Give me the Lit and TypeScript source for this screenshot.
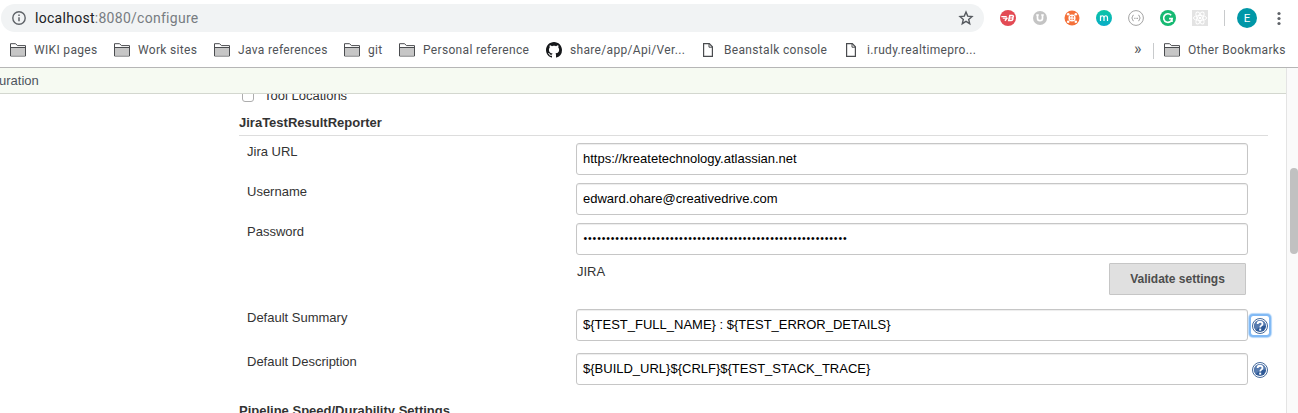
import { LitElement, html, css, svg, nothing } from "lit";
import { customElement, property } from "lit/decorators.js";

const folderIcon = html`<svg class="ico" width="16" height="14" viewBox="0 0 16 14">
  <path d="M.5 13V.7H5.6L7.4 2.6H15.5V13Z" fill="#fff" stroke="#4a4c4f" stroke-width="1"/>
  <path d="M1 5h14v7.5H1z" fill="#c6c6c6"/><path d="M1 4.5h14" stroke="#4a4c4f"/>
</svg>`;
const pageIcon = html`<svg class="ico page" width="10" height="14" viewBox="0 0 10 14">
  <path d="M.6.6H6.3L9.4 3.8V13.4H.6Z" fill="#fff" stroke="#4a4c4f" stroke-width="1.2"/>
  <path d="M6 .8V4.2H9.2" fill="none" stroke="#4a4c4f"/>
</svg>`;
const githubIcon = html`<svg class="ico" width="16" height="16" viewBox="0 0 16 16">
  <path fill="#16181b" d="M8 0C3.58 0 0 3.58 0 8c0 3.54 2.29 6.53 5.47 7.59.4.07.55-.17.55-.38 0-.19-.01-.82-.01-1.49-2.01.37-2.53-.49-2.69-.94-.09-.23-.48-.94-.82-1.13-.28-.15-.68-.52-.01-.53.63-.01 1.08.58 1.23.82.72 1.21 1.87.87 2.33.66.07-.52.28-.87.51-1.07-1.78-.2-3.64-.89-3.64-3.95 0-.87.31-1.59.82-2.15-.08-.2-.36-1.02.08-2.12 0 0 .67-.21 2.2.82.64-.18 1.32-.27 2-.27s1.36.09 2 .27c1.53-1.04 2.2-.82 2.2-.82.44 1.1.16 1.92.08 2.12.51.56.82 1.27.82 2.15 0 3.07-1.87 3.75-3.65 3.95.29.25.54.73.54 1.48 0 1.07-.01 1.93-.01 2.2 0 .21.15.46.55.38A8.01 8.01 0 0 0 16 8c0-4.42-3.58-8-8-8Z"/>
</svg>`;

const extensions = [
  svg`<circle cx="8" cy="8" r="8" fill="#e34a54"/><path d="M1.3 6.6h5.4M2.8 8.3h4.4" stroke="#fff" stroke-width="1.1"/><path d="M5 10.8 7.3 7.6" stroke="#fff" stroke-width="1.5"/><path d="M9.8 5.6h2.6c1.5 0 1.1 2.2-.3 2.3 1.4.2.8 2.6-.8 2.6H8.7Z" fill="none" stroke="#fff" stroke-width="1.5"/><path d="M9 8h3" stroke="#fff"/>`,
  svg`<circle cx="8" cy="8" r="7" fill="#c4c4c4"/><path d="M4.2 5h2.6M9.2 5h2.6M5.5 5v3.3c0 3.2 5 3.2 5 0V5" fill="none" stroke="#fff" stroke-width="1.7"/>`,
  svg`<circle cx="8" cy="8" r="7.5" fill="#f4713a"/><g fill="#fff"><circle cx="8" cy="8" r="3.6"/><circle cx="4.2" cy="4.2" r="1.3"/><circle cx="11.8" cy="4.2" r="1.3"/><circle cx="4.2" cy="11.8" r="1.3"/><circle cx="11.8" cy="11.8" r="1.3"/></g><g fill="#f4713a"><circle cx="6.8" cy="6.7" r=".8"/><circle cx="9.3" cy="6.9" r=".8"/><circle cx="6.9" cy="9.3" r=".8"/><circle cx="9.2" cy="9.2" r=".8"/></g>`,
  svg`<defs><linearGradient id="mg" x2="0" y2="1"><stop stop-color="#0bc5a4"/><stop offset="1" stop-color="#08acc8"/></linearGradient></defs><circle cx="8" cy="8" r="8" fill="url(#mg)"/><path d="M4.5 11V5.5M4.5 8C4.5 5 8 5 8 8v3M8 8c0-3 3.5-3 3.5 0v3" fill="none" stroke="#fff" stroke-width="1.2"/>`,
  svg`<circle cx="8" cy="8" r="7.4" fill="#fff" stroke="#a3a3a3"/><path d="M5.6 5.2C4 5.2 5.2 7.2 3.6 8c1.6.8.4 2.8 2 2.8M10.4 5.2c1.6 0 .4 2 2 2.8-1.6.8-.4 2.8-2 2.8" fill="none" stroke="#969696"/><path d="M6.2 8.3h3.8" stroke="#969696" stroke-dasharray="1 .4"/>`,
  svg`<circle cx="8" cy="8" r="8" fill="#16b972"/><path d="M11.2 5.2A4.3 4.3 0 1 0 12.2 8.6H9.1M12 8.6v3.3" fill="none" stroke="#fff" stroke-width="1.6"/>`,
  svg`<path d="M0 0h16v16H0z" fill="#e3e3e3"/><g fill="none" stroke="#fff" stroke-width="1"><ellipse cx="8" cy="8" rx="6.6" ry="2.5"/><ellipse cx="8" cy="8" rx="6.6" ry="2.5" transform="rotate(60 8 8)"/><ellipse cx="8" cy="8" rx="6.6" ry="2.5" transform="rotate(120 8 8)"/></g><circle cx="8" cy="8" r="1.3" fill="#fff"/>`,
];

const bookmarks = [
  { icon: folderIcon, label: "WIKI pages" },
  { icon: folderIcon, label: "Work sites" },
  { icon: folderIcon, label: "Java references" },
  { icon: folderIcon, label: "git" },
  { icon: folderIcon, label: "Personal reference" },
  { icon: githubIcon, label: "share/app/Api/Ver..." },
  { icon: pageIcon, label: "Beanstalk console" },
  { icon: pageIcon, label: "i.rudy.realtimepro..." },
];

@customElement("browser-chrome")
class BrowserChrome extends LitElement {
  static styles = css`
    :host { display: block; background: #fff; font-family: Roboto, "Liberation Sans", sans-serif; }
    svg { display: block; flex: none; }
    .toolbar { display: flex; align-items: center; height: 28px; padding: 4px 14px 4px 1px; }
    .omnibox { display: flex; align-items: center; width: 983px; height: 28px; border-radius: 14px; background: #f1f3f4; box-sizing: border-box; padding: 0 10px 0 11px; }
    .url { flex: 1; margin-left: 9px; font-size: 14px; letter-spacing: .28px; line-height: 28px; color: #777c81; white-space: nowrap; }
    .url b { font-weight: 400; color: #202124; }
    .exts { display: flex; gap: 16px; margin-left: 16px; }
    .sep { width: 1px; height: 16px; background: #c8cacc; margin-left: 16px; }
    .avatar { width: 20px; height: 20px; border-radius: 50%; background: #0097a7; color: #fff; font-size: 11.5px; line-height: 21px; text-align: center; margin-left: 12px; }
    .dots { margin-left: 19px; }
    .bar { display: flex; align-items: flex-start; height: 31px; padding: 0 12px 0 10px; border-bottom: 1px solid #b6b6b6; font-size: 12px; color: #505357; white-space: nowrap; }
    .list { display: grid; grid-template-columns: 104px 100px 130px 55px 147px 157px 143px 288px; }
    .item { display: flex; align-items: center; gap: 8px; height: 28px; letter-spacing: .33px; }
    .item span { line-height: 28px; }
    .page { margin: 0 3px 0 0; }
    .more { width: 19px; font-size: 16px; line-height: 25px; height: 28px; }
    .bar .sep { margin: 7px 10px 0 0; }
  `;
  render() {
    return html`
      <div class="toolbar">
        <div class="omnibox">
          <svg width="14" height="14" viewBox="0 0 14 14"><circle cx="7" cy="7" r="6.2" fill="none" stroke="#5f6368" stroke-width="1.4"/><path d="M7 6.2v4M7 3.5v1.5" stroke="#5f6368" stroke-width="1.5"/></svg>
          <span class="url"><b>localhost</b>:8080/configure</span>
          <svg width="16" height="16" viewBox="0 0 16 16"><path d="M8 2.1 9.7 6.1 14 6.5 10.7 9.4 11.7 13.7 8 11.4 4.3 13.7 5.3 9.4 2 6.5 6.3 6.1Z" fill="none" stroke="#55595e" stroke-width="1.4"/></svg>
        </div>
        <div class="exts">${extensions.map((e) => html`<svg width="16" height="16" viewBox="0 0 16 16">${e}</svg>`)}</div>
        <div class="sep"></div>
        <div class="avatar">E</div>
        <svg class="dots" width="6" height="16" viewBox="0 0 6 16"><g fill="#5f6368"><circle cx="3" cy="3.5" r="1.6"/><circle cx="3" cy="8.5" r="1.6"/><circle cx="3" cy="13.5" r="1.6"/></g></svg>
      </div>
      <div class="bar">
        <div class="list">${bookmarks.map((b) => html`<div class="item">${b.icon}<span>${b.label}</span></div>`)}</div>
        <div class="more">»</div>
        <div class="sep"></div>
        <div class="item">${folderIcon}<span>Other Bookmarks</span></div>
      </div>`;
  }
}

@customElement("form-row")
class FormRow extends LitElement {
  @property() label = "";
  @property() value = "";
  @property({ type: Boolean }) secret = false;
  @property({ type: Boolean }) help = false;
  @property({ type: Boolean }) focused = false;
  static styles = css`
    :host { display: grid; grid-template-columns: 329px 672px 24px; align-items: start; padding-left: 8px; height: 32px; }
    .label { line-height: 16px; padding-top: 1px; }
    .field { box-sizing: border-box; height: 32px; border: 1px solid #c6c6c6; border-radius: 3px; padding: 0 6px; line-height: 30px; color: #000; white-space: nowrap; box-shadow: inset 0 1px 1px rgba(0,0,0,.075); background: #fff; }
    .secret { font-size: 10.5px; letter-spacing: .876px; line-height: 29px; padding-left: 6.5px; }
    .help { display: flex; align-items: center; justify-content: center; width: 16px; height: 16px; padding: 1px; margin: 8px 0 0 3px; border-radius: 2px; }
    .focused { box-shadow: 0 0 0 2px #82baf5, 0 0 1px 3px #b5d7fa; height: 17px; padding: 1px; margin-top: 7px; }
    svg { display: block; }
  `;
  render() {
    return html`
      <div class="label">${this.label}</div>
      <div class="field ${this.secret ? "secret" : ""}">${this.value}</div>
      ${this.help
        ? html`<div class="help ${this.focused ? "focused" : ""}"><svg width="16" height="16" viewBox="0 0 16 16">
            <circle cx="8" cy="8" r="7.5" fill="#fff" stroke="#44699b"/><circle cx="8" cy="8" r="6.1" fill="#2f5a97"/>
            <path d="M2 8a6 6 0 0 1 12 0C10 7 7 9 4 12A6 6 0 0 1 2 8Z" fill="#7898c2" opacity=".55"/>
            <path d="M5.6 6.1C5.6 3 10.5 3 10.5 5.9c0 1.8-2.3 1.7-2.3 3.5" fill="none" stroke="#fff" stroke-width="1.8"/><path d="M7.2 10.6h2v2h-2z" fill="#fff"/></svg></div>`
        : nothing}`;
  }
}

@customElement("app-root")
class AppRoot extends LitElement {
  static styles = css`
    :host { display: flex; flex-direction: column; width: 1298px; height: 413px; overflow: hidden; background: #fff; font-family: "Liberation Sans", Arial, sans-serif; font-size: 13px; color: #333; }
    .view { flex: 1; min-height: 0; display: flex; }
    .page { width: 1286px; display: flex; flex-direction: column; overflow: hidden; }
    .crumbs { flex: none; height: 25px; line-height: 26px; background: #f6faf2; border-bottom: 1px solid #d3d7cf; color: #4d545d; white-space: nowrap; text-indent: -1px; }
    .content { flex: 1; min-height: 0; overflow: hidden; padding: 0 18px 0 239px; }
    .clip { display: flex; align-items: flex-end; height: 9px; overflow: hidden; padding-left: 3px; }
    .check { box-sizing: border-box; width: 12px; height: 12px; border: 1px solid #adadad; border-radius: 3px; margin-bottom: 1px; }
    .tool-label { line-height: 15px; height: 15px; margin: 0 0 0 10px; white-space: nowrap; }
    .heading { font-weight: 700; line-height: 16px; }
    .first { margin-top: 12px; padding-bottom: 4px; border-bottom: 1px solid #ddd; }
    .rows { display: grid; gap: 8px; margin-top: 7px; }
    .status { display: flex; justify-content: space-between; height: 32px; margin: 8px 22px 14px 338px; line-height: 17px; }
    .button { box-sizing: border-box; width: 137px; height: 32px; line-height: 30px; text-align: center; background: #e0e0e0; border: 1px solid #c6c6c6; border-radius: 1px; color: #4d4d4d; font-weight: 700; font-size: 12px; }
    .spaced { gap: 12px; margin-top: 0; }
    .last { margin-top: 18px; }
    .scroll { box-sizing: border-box; width: 12px; background: #fafafa; border-left: 1px solid #e4e4e4; padding: 100px 0 0 3px; }
    .thumb { height: 86px; width: 8px; border-radius: 4px; background: #c1c1c1; }
  `;
  render() {
    return html`
      <browser-chrome></browser-chrome>
      <div class="view">
        <div class="page">
          <div class="crumbs">uration</div>
          <div class="content">
            <div class="clip"><div class="check"></div><span class="tool-label">Tool Locations</span></div>
            <div class="heading first">JiraTestResultReporter</div>
            <div class="rows">
              <form-row label="Jira URL" value="https://kreatetechnology.atlassian.net"></form-row>
              <form-row label="Username" value="edward.ohare@creativedrive.com"></form-row>
              <form-row label="Password" value=${"•".repeat(58)} secret></form-row>
            </div>
            <div class="status"><span>JIRA</span><div class="button">Validate settings</div></div>
            <div class="rows spaced">
              <form-row label="Default Summary" value=${"${TEST_FULL_NAME} : ${TEST_ERROR_DETAILS}"} help focused></form-row>
              <form-row label="Default Description" value=${"${BUILD_URL}${CRLF}${TEST_STACK_TRACE}"} help></form-row>
            </div>
            <div class="heading last">Pipeline Speed/Durability Settings</div>
          </div>
        </div>
        <div class="scroll"><div class="thumb"></div></div>
      </div>`;
  }
}
